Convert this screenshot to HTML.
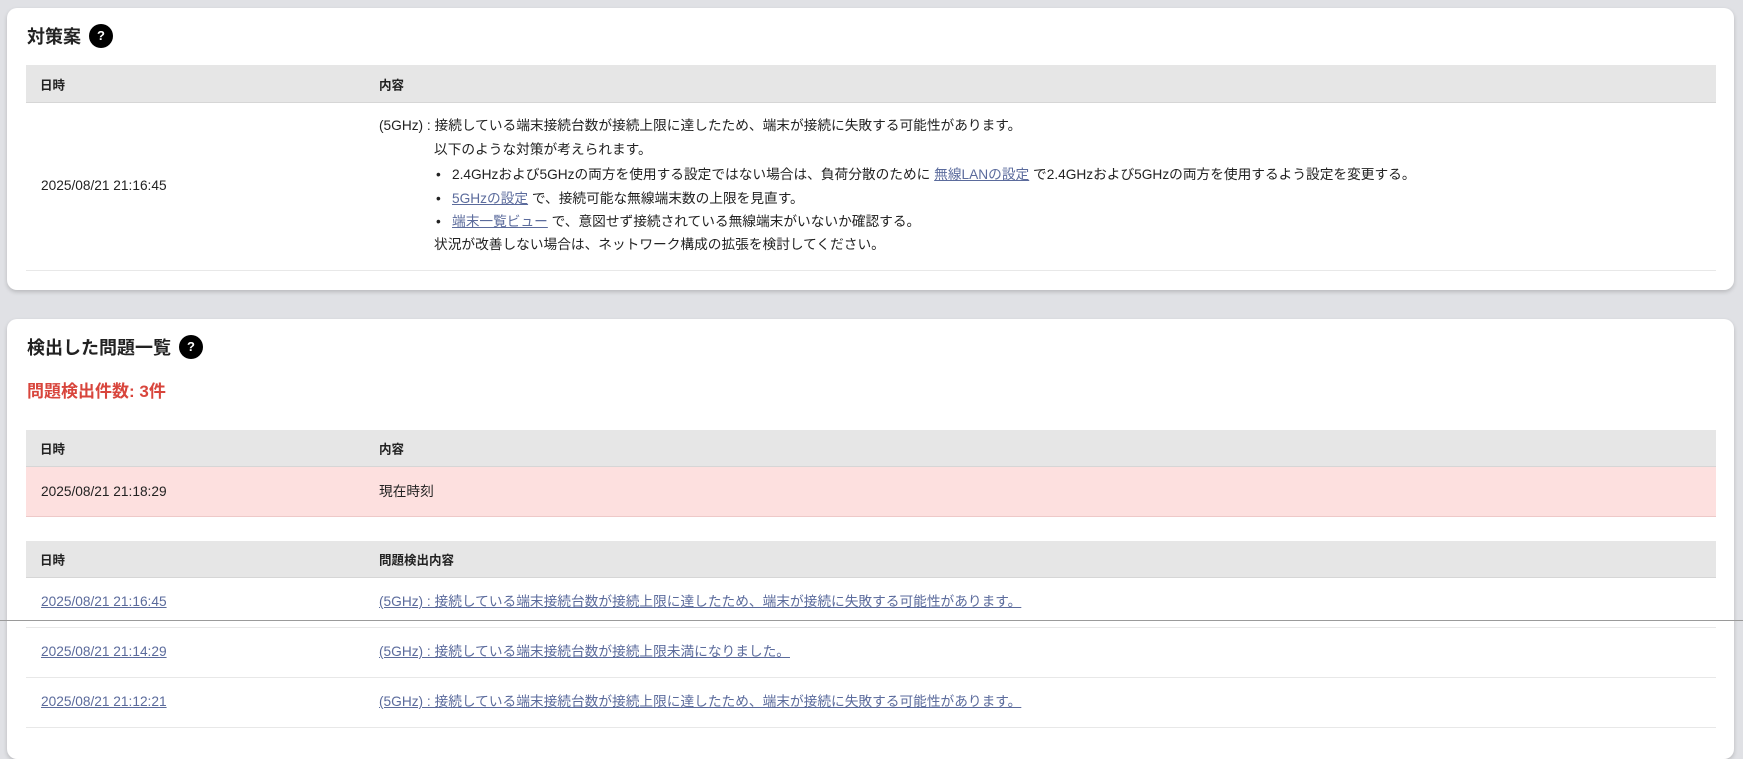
<!DOCTYPE html>
<html><head><meta charset="utf-8"><style>
*{margin:0;padding:0;box-sizing:border-box}
body{width:1743px;height:741px;background:#e0e1e5;font-family:"Liberation Sans","Noto Sans CJK JP",sans-serif;color:#222;position:relative;overflow:hidden;font-size:14px}
.card{position:absolute;left:7px;width:1727px;background:#fff;border-radius:10px;box-shadow:0 2px 4px rgba(0,0,0,.18)}
.abs{position:absolute;white-space:nowrap}
.title{font-size:18px;font-weight:bold;color:#222}
.help{display:inline-block;width:24px;height:24px;border-radius:50%;background:#000;color:#fff;font-size:13px;font-weight:bold;text-align:center;line-height:24px;vertical-align:middle;margin-left:8px;position:relative;top:-2px}
.hdr{position:absolute;left:19px;width:1690px;background:#e6e6e6;border-bottom:1px solid #d6d6d6}
.hdr span{position:absolute;font-size:12.5px;font-weight:bold;top:50%;transform:translateY(-50%)}
.line{position:absolute;left:19px;width:1690px;height:1px;background:#e8e8e8}
a{color:#5b6b9c;text-decoration:underline}
.t{position:absolute;white-space:nowrap;font-size:13.7px;line-height:20px}
.b{display:inline-block;width:16px}
</style></head><body>
<div class="card" style="top:8px;height:282px">
  <div class="abs title" style="left:20px;top:17px;line-height:24px">対策案<span class="help">?</span></div>
  <div class="hdr" style="top:57px;height:38px"><span style="left:14px">日時</span><span style="left:353px">内容</span></div>
  <div class="t" style="left:34px;top:168px">2025/08/21 21:16:45</div>
  <div class="t" style="left:372px;top:108px">(5GHz) : 接続している端末接続台数が接続上限に達したため、端末が接続に失敗する可能性があります。</div>
  <div class="t" style="left:427px;top:132px">以下のような対策が考えられます。</div>
  <div class="t" style="left:429px;top:157px"><span class="b">•</span>2.4GHzおよび5GHzの両方を使用する設定ではない場合は、負荷分散のために <a>無線LANの設定</a> で2.4GHzおよび5GHzの両方を使用するよう設定を変更する。</div>
  <div class="t" style="left:429px;top:181px"><span class="b">•</span><a>5GHzの設定</a> で、接続可能な無線端末数の上限を見直す。</div>
  <div class="t" style="left:429px;top:204px"><span class="b">•</span><a>端末一覧ビュー</a> で、意図せず接続されている無線端末がいないか確認する。</div>
  <div class="t" style="left:427px;top:227px">状況が改善しない場合は、ネットワーク構成の拡張を検討してください。</div>
  <div class="line" style="top:262px"></div>
</div>
<div class="card" style="top:319px;height:440px">
  <div class="abs title" style="left:20px;top:17px;line-height:24px">検出した問題一覧<span class="help">?</span></div>
  <div class="abs" style="left:20px;top:62px;font-size:17px;font-weight:bold;color:#d8453c;line-height:22px">問題検出件数: 3件</div>
  <div class="hdr" style="top:111px;height:37px"><span style="left:14px">日時</span><span style="left:353px">内容</span></div>
  <div class="abs" style="left:19px;top:148px;width:1690px;height:50px;background:#fde0df;border-bottom:1px solid #eec9c8"></div>
  <div class="t" style="left:34px;top:163px">2025/08/21 21:18:29</div>
  <div class="t" style="left:372px;top:163px">現在時刻</div>
  <div class="hdr" style="top:222px;height:37px"><span style="left:14px">日時</span><span style="left:353px">問題検出内容</span></div>
  <div class="t" style="left:34px;top:273px"><a>2025/08/21 21:16:45</a></div>
  <div class="t" style="left:372px;top:273px"><a>(5GHz) : 接続している端末接続台数が接続上限に達したため、端末が接続に失敗する可能性があります。</a></div>
  <div class="line" style="top:308px"></div>
  <div class="t" style="left:34px;top:323px"><a>2025/08/21 21:14:29</a></div>
  <div class="t" style="left:372px;top:323px"><a>(5GHz) : 接続している端末接続台数が接続上限未満になりました。</a></div>
  <div class="line" style="top:358px"></div>
  <div class="t" style="left:34px;top:373px"><a>2025/08/21 21:12:21</a></div>
  <div class="t" style="left:372px;top:373px"><a>(5GHz) : 接続している端末接続台数が接続上限に達したため、端末が接続に失敗する可能性があります。</a></div>
  <div class="line" style="top:408px"></div>
</div>
<div class="abs" style="left:0;top:620px;width:1743px;height:1px;background:#9a9a9a"></div>
</body></html>
